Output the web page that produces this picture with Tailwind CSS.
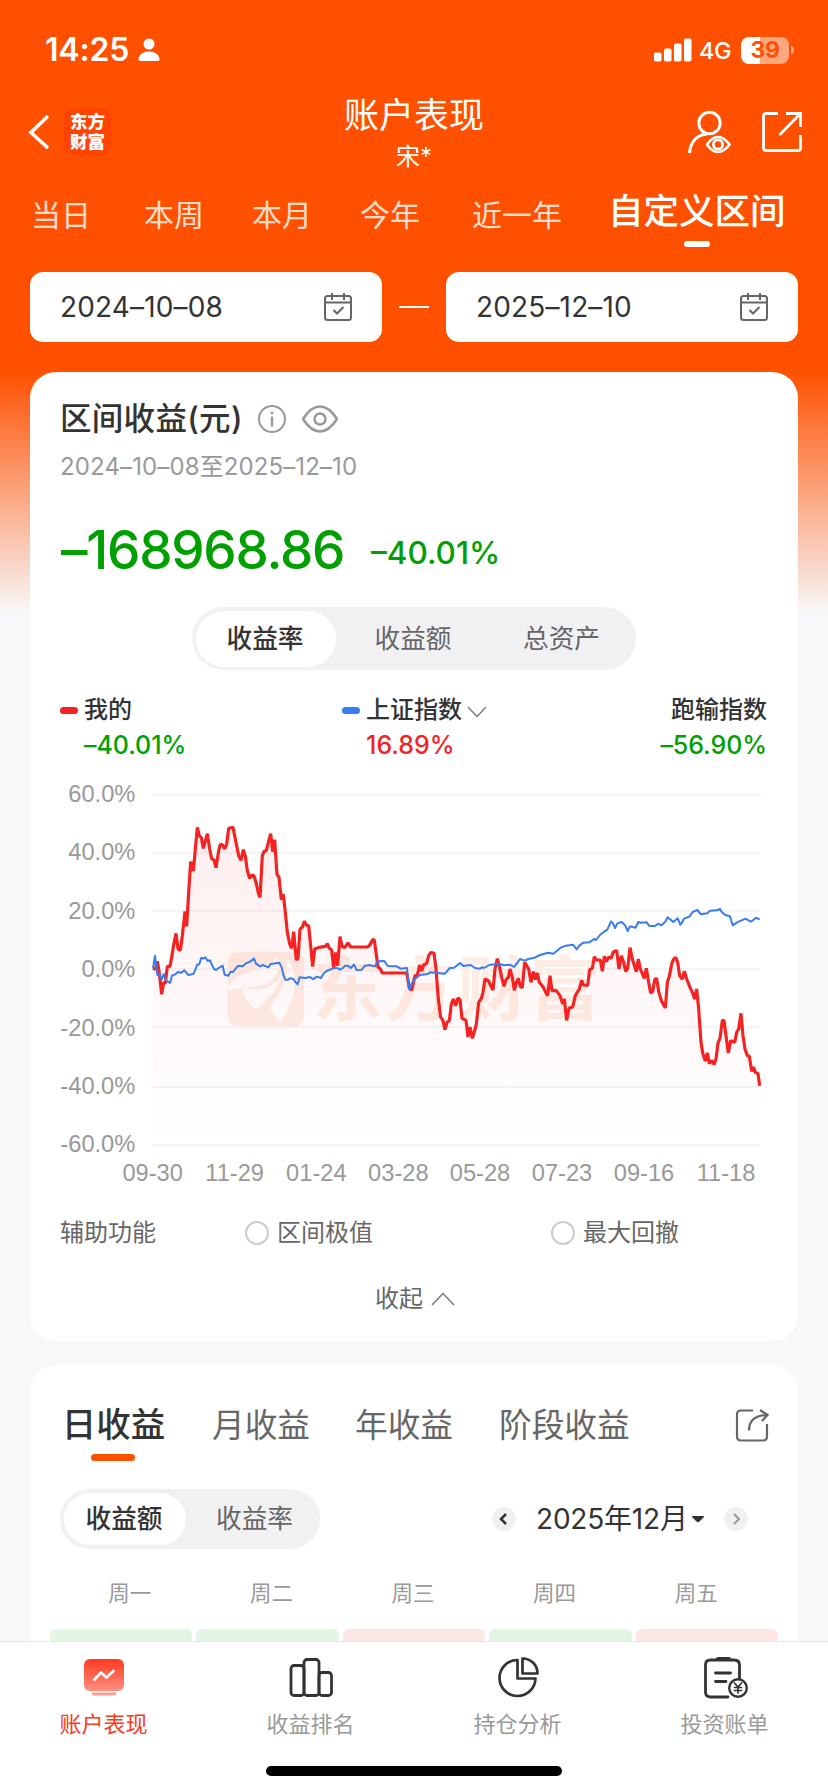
<!DOCTYPE html>
<html lang="zh-CN">
<head>
    <meta charset="UTF-8">
    <meta name="viewport" content="width=device-width, initial-scale=1.0">
    <title>账户表现</title>
    <script src="https://cdn.jsdelivr.net/npm/@tailwindcss/browser@4"></script>
    <style>
        body { font-family: Inter, "Noto Sans CJK SC", sans-serif; }
    </style>
</head>
<body class="w-[828px] h-[1792px] overflow-hidden bg-[#f7f8fa] text-[#333]">
    <div class="relative flex flex-col w-[828px] h-[1792px] overflow-hidden bg-[linear-gradient(to_bottom,#ff5000_0px,#ff5000_370px,#f7f8fa_614px)]">

        <!-- Status bar -->
        <div class="flex items-center h-[100px] pl-[45px] pr-[34px] text-white shrink-0">
            <span class="text-[32px] font-semibold leading-none tracking-[-0.2px]">14:25</span>
            <svg class="ml-[9px]" width="22" height="24" viewBox="0 0 22 24" fill="#fff">
                <circle cx="11" cy="6" r="5.5"/>
                <path d="M0.500 21.500C.5 16.500 5 13.500 11 13.500S21.500 16.500 21.500 21.500Q21.500 23 19.500 23H2.500Q.5 23 .5 21.500Z"/>
            </svg>
            <div class="flex items-center ml-auto">
                <svg width="38" height="24" viewBox="0 0 38 24" fill="#fff">
                    <rect x="0" y="14.500" width="7.500" height="9" rx="1.800"/>
                    <rect x="10" y="10.500" width="7.500" height="13" rx="1.800"/>
                    <rect x="20" y="5.500" width="7.500" height="18" rx="1.800"/>
                    <rect x="30" y=".5" width="7.500" height="23" rx="1.800"/>
                </svg>
                <span class="ml-[7px] mt-[2px] w-[34px] text-[23.500px] font-medium leading-none tracking-[-0.5px]">4G</span>
                <div class="ml-[8px] w-[48px] h-[27px] rounded-[8px] flex items-center justify-center text-[23px] font-bold leading-none tracking-[-0.3px] text-[#ff5000] bg-[linear-gradient(to_right,#fff_19px,#ffa880_19px)]">39</div>
                <svg class="ml-[2px]" width="3" height="10" viewBox="0 0 3 10"><path d="M0 .5Q3 2 3 5T0 9.500Z" fill="#ffa880"/></svg>
            </div>
        </div>

        <!-- Title bar -->
        <div class="grid grid-cols-3 h-[80px] text-white shrink-0">
            <div class="flex items-start pl-[28px]">
                <svg class="mt-[14px]" width="22" height="36" viewBox="0 0 22 36" fill="none" stroke="#fff" stroke-width="3.600"><path d="M20 2L3 18.500L20 34"/></svg>
                <div class="ml-[14px] mt-[8px] w-[47px] h-[47px] rounded-[10px] bg-[#ff4400] flex items-center justify-center text-center text-[17.500px] leading-[20px] font-black">东方<br>财富</div>
            </div>
            <div class="flex flex-col items-center">
                <h1 class="text-[35px] leading-[40px] font-normal mt-[-5px]">账户表现</h1>
                <div class="text-[24px] leading-[30px] mt-[7px]">宋*</div>
            </div>
            <div class="flex items-start justify-end pr-[25px] pt-[10px]">
                <svg width="44" height="44" viewBox="0 0 44 44" fill="none" stroke="#fff" stroke-width="3">
                    <circle cx="22.500" cy="13" r="10.700"/>
                    <path d="M2.500 43C3.500 32 10 24.500 20 24"/>
                    <path d="M20 34.500Q25 27 31 27T42.500 34.500Q37 42 31 42T20 34.500Z" stroke-width="2.600"/>
                    <circle cx="31" cy="34.500" r="4.600" stroke-width="2.800"/>
                </svg>
                <svg class="ml-[30px] mt-[1px]" width="42" height="42" viewBox="0 0 42 42" fill="none" stroke="#fff" stroke-width="2.800">
                    <path d="M17 2.500H5Q2.500 2.500 2.500 5V37Q2.500 39.500 5 39.500H37Q39.500 39.500 39.500 37V24"/>
                    <path d="M25 2.500H39.500V16M39.500 2.500L18.500 24"/>
                </svg>
            </div>
        </div>

        <!-- Period tabs -->
        <div class="flex h-[92px] pl-[31px] text-[30px] leading-[44px] text-white/80 shrink-0 whitespace-nowrap">
            <div class="mt-[13px] w-[113px]">当日</div>
            <div class="mt-[13px] w-[108px]">本周</div>
            <div class="mt-[13px] w-[108px]">本月</div>
            <div class="mt-[13px] w-[112px]">今年</div>
            <div class="mt-[13px] w-[136px]">近一年</div>
            <div class="mt-[10px] flex flex-col items-center text-white text-[35.500px] font-medium">
                <span>自定义区间</span>
                <span class="mt-[7px] w-[26px] h-[6px] rounded-[3px] bg-white"></span>
            </div>
        </div>

        <!-- Date range -->
        <div class="flex items-center justify-between px-[30px] h-[70px] shrink-0 text-[28px]">
            <div class="flex items-center justify-between w-[352px] h-[70px] rounded-[13px] bg-white pl-[30px] pr-[29px]">
                <span class="tracking-[0.15px]">2024–10–08</span>
                <svg width="30" height="30" viewBox="0 0 30 30" fill="none" stroke="#666" stroke-width="2">
                    <rect x="2" y="4" width="26" height="24" rx="2.500"/>
                    <path d="M2 10.500H28M9 1V8M21 1V8M10.500 18L14 21.500L20.500 15"/>
                </svg>
            </div>
            <div class="w-[30px] h-[2px] bg-white"></div>
            <div class="flex items-center justify-between w-[352px] h-[70px] rounded-[13px] bg-white pl-[30px] pr-[29px]">
                <span class="tracking-[0.15px]">2025–12–10</span>
                <svg width="30" height="30" viewBox="0 0 30 30" fill="none" stroke="#666" stroke-width="2">
                    <rect x="2" y="4" width="26" height="24" rx="2.500"/>
                    <path d="M2 10.500H28M9 1V8M21 1V8M10.500 18L14 21.500L20.500 15"/>
                </svg>
            </div>
        </div>

        <!-- Range profit card -->
        <section class="flex flex-col mx-[30px] mt-[30px] h-[969px] rounded-[26px] bg-white shrink-0">
            <div class="flex items-center h-[40px] mt-[26px] pl-[30px]">
                <h2 class="text-[31.500px] font-medium leading-[40px] w-[183px] tracking-[0.3px] whitespace-nowrap mt-[1px]">区间收益(元)</h2>
                <svg class="ml-[14px] mt-[2px]" width="30" height="30" viewBox="0 0 30 30" fill="none" stroke="#999" stroke-width="2">
                    <circle cx="15" cy="15" r="13"/>
                    <path d="M15 12.500V22.500" stroke-width="2.400"/>
                    <circle cx="15" cy="9" r="1.400" fill="#999" stroke="none"/>
                </svg>
                <svg class="ml-[14px] mt-[1px]" width="38" height="30" viewBox="0 0 38 30" fill="none" stroke="#999" stroke-width="2.500" stroke-linejoin="round">
                    <path d="M2 15Q10 2.500 19 2.500T36 15Q28 27.500 19 27.500T2 15Z"/>
                    <circle cx="19" cy="15" r="5.500"/>
                </svg>
            </div>
            <div class="pl-[30px] mt-[12px] h-[34px] leading-[34px] text-[24px] tracking-[0.12px] text-[#999]">2024–10–08至2025–12–10</div>
            <div class="flex items-baseline pl-[31px] mt-[36px] h-[60px] text-[#00a000] font-medium leading-[60px]">
                <span class="text-[53px] tracking-[-1.25px] w-[310px]">–168968.86</span>
                <span class="relative top-[-5px] text-[31.500px]">–40.01%</span>
            </div>
            <div class="self-center flex items-center w-[444px] h-[63px] mt-[27px] px-[4px] rounded-[32px] bg-[#f1f1f4] text-[25.700px] leading-[56px] text-[#666]">
                <div class="w-[140px] h-[56px] rounded-[28px] bg-white text-center pr-[2px] font-medium text-[#333]">收益率</div>
                <div class="w-[154px] text-center">收益额</div>
                <div class="flex-1 text-center pl-[1px]">总资产</div>
            </div>

            <!-- Legend -->
            <div class="flex justify-between mt-[22px] h-[75px] pl-[30px] pr-[31px] text-[24px] font-medium leading-[36px]">
                <div class="w-[282px]">
                    <div class="flex items-center"><span class="w-[18px] h-[7px] rounded-[3.500px] bg-[#f62222] mr-[6px]"></span>我的</div>
                    <div class="pl-[24px] mt-[-1px] text-[25px] tracking-[-0.05px] text-[#00a000]">–40.01%</div>
                </div>
                <div class="flex-1">
                    <div class="flex items-center"><span class="w-[18px] h-[7px] rounded-[3.500px] bg-[#377df0] mr-[6px]"></span>上证指数
                        <svg class="ml-[5px] mt-[3px]" width="20" height="12" viewBox="0 0 20 12" fill="none" stroke="#777" stroke-width="1.300"><path d="M1 1L10 10.500L19 1"/></svg>
                    </div>
                    <div class="pl-[24px] mt-[-1px] text-[25px] text-[#f62222]">16.89%</div>
                </div>
                <div class="text-right">
                    <div>跑输指数</div>
                    <div class="mt-[-1px] text-[25px] tracking-[-0.05px] text-[#00a000]">–56.90%</div>
                </div>
            </div>

            <!-- Chart, drawn at 3 units per pixel -->
            <svg class="ml-[20px] mt-[2px] shrink-0" width="728" height="430" viewBox="0 0 2184 1290" fill="none">
                <defs>
                    <linearGradient id="areaFill" gradientUnits="userSpaceOnUse" x1="0" y1="175" x2="0" y2="1127">
                        <stop offset="0" stop-color="#f62222" stop-opacity="0.075"/>
                        <stop offset="1" stop-color="#f62222" stop-opacity="0"/>
                    </linearGradient>
                </defs>
                <g stroke="#f2f2f7" stroke-width="5">
                    <path d="M306 77.500H2132M306 252H2132M306 426H2132M306 600H2132M306 774H2132M306 954H2132M306 1128H2132"/>
                </g>
                <g fill="#fdede4">
                    <path fill-rule="evenodd" d="M567 549H728Q762 549 762 583V737Q762 771 728 771H567Q533 771 533 737V583Q533 549 567 549ZM528 672C528 640 560 622 600 608C650 592 672 585 678 562C694 590 686 625 652 645C605 662 550 650 528 672ZM576 650C580 680 596 708 620 722C655 690 690 660 700 600C690 650 620 680 576 650ZM708 566C722 620 700 660 664 706C655 722 670 735 692 760C720 720 745 660 728 600Q722 578 708 566Z"/>
                    <text x="788" y="737" font-family="Noto Sans CJK SC, sans-serif" font-weight="700" font-size="210" textLength="862">东方财富</text>
                </g>
                <path id="area" fill="url(#areaFill)"/>
                <path id="mine" stroke="#f62222" stroke-width="9.500" stroke-linejoin="bevel"/>
                <path id="index" stroke="#377df0" stroke-width="6" stroke-linejoin="round"/>
                <g fill="#999" font-family="Liberation Sans, Arial, sans-serif" font-size="71" text-anchor="end">
                    <text x="256" y="99">60.0%</text>
                    <text x="256" y="273">40.0%</text>
                    <text x="256" y="449">20.0%</text>
                    <text x="256" y="624">0.0%</text>
                    <text x="256" y="800">-20.0%</text>
                    <text x="256" y="974">-40.0%</text>
                    <text x="256" y="1150">-60.0%</text>
                </g>
                <g fill="#999" font-family="Liberation Sans, Arial, sans-serif" font-size="71" text-anchor="middle">
                    <text x="308" y="1236">09-30</text>
                    <text x="554" y="1236">11-29</text>
                    <text x="799" y="1236">01-24</text>
                    <text x="1045" y="1236">03-28</text>
                    <text x="1290" y="1236">05-28</text>
                    <text x="1536" y="1236">07-23</text>
                    <text x="1782" y="1236">09-16</text>
                    <text x="2028" y="1236">11-18</text>
                </g>
            </svg>

            <div class="flex items-center h-[36px] mt-[16px] pl-[30px] text-[24px] text-[#666]">
                <span class="w-[185px]">辅助功能</span>
                <span class="w-[24px] h-[24px] rounded-full border-2 border-[#ccc] mr-[8px]"></span>
                <span class="w-[274px]">区间极值</span>
                <span class="w-[24px] h-[24px] rounded-full border-2 border-[#ccc] mr-[8px]"></span>
                <span>最大回撤</span>
            </div>
            <div class="flex items-center justify-center mt-[30px] h-[36px] pl-[2px] text-[24px] text-[#666]">
                收起
                <svg class="ml-[8px]" width="24" height="14" viewBox="0 0 24 14" fill="none" stroke="#777" stroke-width="1.500"><path d="M1 13L12 1.500L23 13"/></svg>
            </div>
        </section>

        <!-- Daily profit card -->
        <section class="flex flex-col mx-[30px] mt-[24px] h-[420px] rounded-[26px] bg-white shrink-0">
            <div class="flex items-start pl-[31px] pr-[28px] mt-[36px] h-[88px] text-[32.700px] leading-[48px] text-[#666]">
                <div class="flex flex-col items-center w-[105px] text-[34.500px] font-medium text-[#333]">
                    <span>日收益</span>
                    <span class="mt-[5px] mr-[1px] w-[44px] h-[7px] rounded-[3.500px] bg-[#ff5000]"></span>
                </div>
                <span class="ml-[46px] w-[143px]">月收益</span>
                <span class="w-[144px]">年收益</span>
                <span>阶段收益</span>
                <svg class="ml-auto mt-[6px]" width="36" height="36" viewBox="0 0 36 36" fill="none" stroke="#666" stroke-width="2.200">
                    <path d="M19 3.500H7Q3 3.500 3 7.500V29.500Q3 33.500 7 33.500H29Q33 33.500 33 29.500V17"/>
                    <path d="M15 23.500C15 14 20 8.500 33 8M26 3L33.500 8L28 14"/>
                </svg>
            </div>
            <div class="flex items-center h-[60px] pl-[30px] pr-[50px]">
                <div class="flex items-center w-[260px] h-[60px] px-[4px] rounded-[30px] bg-[#f1f1f4] text-[25.700px] leading-[52px] text-[#666]">
                    <div class="w-[122px] h-[52px] rounded-[26px] bg-white text-center pr-[2px] font-medium text-[#333]">收益额</div>
                    <div class="flex-1 text-center pl-[7px]">收益率</div>
                </div>
                <div class="flex items-center ml-auto">
                    <svg width="24" height="24" viewBox="0 0 24 24" fill="none"><circle cx="12" cy="12" r="12" fill="#f1f1f4"/><path d="M14 7L9 12L14 17" stroke="#333" stroke-width="2.500"/></svg>
                    <span class="ml-[20px] w-[148px] text-[28px] leading-[40px] tracking-[-0.2px] whitespace-nowrap">2025年12月</span>
                    <svg class="ml-[8px]" width="12" height="7" viewBox="0 0 12 7" fill="#333"><path d="M0 0H12V1L7.500 5.500Q6 7 4.500 5.500L0 1Z"/></svg>
                    <svg class="ml-[20px]" width="24" height="24" viewBox="0 0 24 24" fill="none"><circle cx="12" cy="12" r="12" fill="#f1f1f4"/><path d="M10 7L15 12L10 17" stroke="#999" stroke-width="2"/></svg>
                </div>
            </div>
            <div class="grid grid-cols-5 pl-[29px] pr-[31px] mt-[26px] h-[36px] leading-[36px] text-[21.500px] text-[#999] text-center">
                <span>周一</span>
                <span>周二</span>
                <span>周三</span>
                <span>周四</span>
                <span>周五</span>
            </div>
            <div class="grid grid-cols-5 gap-[4px] px-[20px] mt-[18px]">
                <div class="h-[90px] rounded-[6px] bg-[#e4f4e5]"></div>
                <div class="h-[90px] rounded-[6px] bg-[#e4f4e5]"></div>
                <div class="h-[90px] rounded-[6px] bg-[#fde7e6]"></div>
                <div class="h-[90px] rounded-[6px] bg-[#e4f4e5]"></div>
                <div class="h-[90px] rounded-[6px] bg-[#fde7e6]"></div>
            </div>
        </section>

        <!-- Bottom tab bar, over the scrolled page -->
        <nav class="absolute left-0 bottom-0 w-[828px] h-[151px] bg-white border-t border-[#e6e6e9]">
            <div class="grid grid-cols-4 text-center text-[22px] leading-[32px] text-[#999]">
                <div class="flex flex-col items-center pt-[12px] text-[#fa3a20]">
                    <svg width="48" height="48" viewBox="0 0 48 48" fill="none">
                        <defs><linearGradient id="tabFill" x1="0" y1="0" x2="0" y2="1"><stop stop-color="#ff3a22"/><stop offset="1" stop-color="#ff8f80"/></linearGradient></defs>
                        <rect x="4" y="5" width="40" height="32" rx="6" fill="url(#tabFill)"/>
                        <rect x="12" y="38.500" width="24" height="3" rx="1.200" fill="#ff9e90"/>
                        <path d="M14.500 25.500L21 18.500L26.500 23.500L33.500 17" stroke="#fff" stroke-width="2.600" stroke-linecap="round" stroke-linejoin="round"/>
                    </svg>
                    <span class="mt-[6px]">账户表现</span>
                </div>
                <div class="flex flex-col items-center pt-[12px]">
                    <svg width="48" height="48" viewBox="0 0 48 48" fill="none" stroke="#333" stroke-width="2.800">
                        <rect x="4" y="11.500" width="13" height="30" rx="3"/>
                        <rect x="17" y="5.500" width="15" height="36" rx="3"/>
                        <rect x="32" y="18.500" width="12.500" height="23" rx="3"/>
                    </svg>
                    <span class="mt-[6px]">收益排名</span>
                </div>
                <div class="flex flex-col items-center pt-[12px]">
                    <svg width="48" height="48" viewBox="0 0 48 48" fill="none" stroke="#333" stroke-width="2.700" stroke-linejoin="round">
                        <path d="M23.500 6A18 18 0 1 0 41.500 24.500H23.500Z"/>
                        <path d="M28.500 4.500V19.500H43.500C43.500 11 37 4.500 28.500 4.500Z"/>
                    </svg>
                    <span class="mt-[6px]">持仓分析</span>
                </div>
                <div class="flex flex-col items-center pt-[12px]">
                    <svg width="48" height="48" viewBox="0 0 48 48" fill="none" stroke="#333" stroke-width="2.800" stroke-linecap="round" stroke-linejoin="round">
                        <path d="M27 43H10Q4.500 43 4.500 38V11Q4.500 6 9.500 6H33Q38.500 6 38.500 11V24"/>
                        <path d="M17 5H28" stroke-width="4"/>
                        <path d="M14.500 19H29.500M14.500 27.500H25"/>
                        <circle cx="37" cy="34" r="8.800" stroke-width="2.400"/>
                        <path d="M33.500 29L37 33L40.500 29M37 33V39M33.500 33.500H40.500M33.500 36.500H40.500" stroke-width="1.700"/>
                    </svg>
                    <span class="mt-[6px]">投资账单</span>
                </div>
            </div>
            <div class="mx-auto mt-[26px] w-[296px] h-[10px] rounded-[5px] bg-black"></div>
        </nav>
    </div>

    <script>
        // x,y pairs; the second list of each series starts at x = 1050
        const OFFSET = 1050;
        const mineA = '309,598 316,601 322,577 328,612 335,676 341,640 346,643 352,592 360,592 365,565 371,528 378,493 384,540 391,544 397,500 405,427 410,472 416,370 422,278 430,306 436,240 442,175 448,200 454,206 460,238 472,194 479,240 485,269 492,273 498,296 506,245 511,226 518,228 524,240 530,225 536,178 549,175 556,210 566,260 573,274 580,242 586,262 592,305 599,328 606,318 612,321 618,340 625,372 630,385 637,260 642,247 649,245 655,220 662,194 668,248 674,212 681,316 687,325 694,392 700,376 706,430 712,490 719,525 725,538 731,488 739,573 744,568 750,480 757,475 763,457 769,468 776,471 782,530 788,593 794,540 808,535 820,533 826,532 832,524 838,538 845,543 851,597 857,550 863,590 870,503 876,532 884,536 894,522 902,534 952,534 958,530 969,511 973,514 978,550 984,595 990,598 997,612 1070,612 1078,655 1085,664 1095,620 1102,618';
        const mineB = '59,588 65,606 71,588 80,583 86,560 92,551 102,552 108,600 115,690 122,745 128,752 135,782 141,760 148,755 154,705 160,690 167,710 174,687 180,692 186,748 198,754 204,804 210,774 217,808 224,785 229,765 236,700 244,688 249,670 255,630 266,636 272,650 279,663 285,600 292,569 299,595 305,625 312,652 318,632 325,625 330,600 337,625 343,664 349,640 355,628 361,652 367,656 374,580 386,600 393,640 400,608 406,632 412,612 418,640 430,655 437,670 443,680 450,620 456,665 468,664 480,680 488,704 493,690 500,754 507,718 518,714 526,680 538,660 545,634 550,648 563,649 569,602 577,598 583,563 589,573 601,573 607,607 613,562 619,578 626,564 633,568 640,549 650,544 657,600 664,560 671,580 677,607 683,598 690,536 697,570 703,590 709,608 715,570 721,600 733,628 739,598 746,640 752,672 758,668 764,632 770,628 776,668 784,695 796,717 802,640 808,622 815,585 820,572 827,565 833,580 839,620 847,630 853,607 860,630 870,655 878,672 884,690 890,660 896,720 903,820 908,852 916,876 922,852 928,884 935,874 942,886 948,870 954,822 960,808 967,755 972,754 978,800 985,852 992,815 1004,820 1010,790 1016,780 1023,733 1029,800 1035,840 1042,860 1048,862 1055,907 1060,894 1066,910 1074,914 1079,950';
        const indexA = '309,598 315,560 322,618 328,614 335,632 341,615 348,634 360,642 366,620 376,616 385,608 392,612 403,604 415,618 430,615 435,605 441,588 448,585 454,566 460,569 466,565 473,576 480,574 486,588 492,600 498,603 506,597 518,590 524,617 535,620 542,608 549,609 556,600 565,590 578,592 588,583 600,578 612,569 618,584 630,592 638,588 655,595 662,585 688,581 695,595 700,618 706,632 714,632 720,628 730,630 737,640 743,646 749,625 765,627 780,624 789,631 800,623 813,627 822,612 832,605 850,598 857,596 863,598 870,602 880,596 886,590 894,590 902,597 912,587 920,603 935,602 945,590 958,588 965,590 975,592 982,577 1003,576 1013,591 1040,592 1052,599 1071,597 1076,655';
        const indexB = '28,662 35,645 42,632 60,618 84,615 90,610 135,614 148,598 162,596 180,582 190,591 212,588 225,597 240,599 246,595 252,597 268,588 295,584 312,589 330,587 342,594 350,584 360,570 374,575 385,570 404,566 420,558 444,551 460,554 482,536 498,530 519,527 530,541 538,530 550,521 568,520 582,510 588,513 600,498 612,488 622,482 633,457 639,463 645,477 652,463 665,459 676,470 683,486 690,472 707,476 715,459 722,461 740,460 748,471 765,471 774,464 784,469 796,458 803,445 812,452 820,459 833,448 841,467 848,458 852,449 868,443 878,429 892,423 903,436 922,433 930,425 950,424 960,420 966,430 976,438 990,442 998,469 1010,461 1036,449 1053,458 1068,446 1079,452';

        function linePath(first, second) {
            const shifted = second.split(' ').map(p => {
                const [x, y] = p.split(',').map(Number);
                return `${x + OFFSET},${y}`;
            });
            return 'M' + first.split(' ').concat(shifted).join('L');
        }

        const mine = linePath(mineA, mineB);
        document.getElementById('mine').setAttribute('d', mine);
        document.getElementById('area').setAttribute('d', mine + 'V1127H309Z');
        document.getElementById('index').setAttribute('d', linePath(indexA, indexB));
    </script>
</body>
</html>
